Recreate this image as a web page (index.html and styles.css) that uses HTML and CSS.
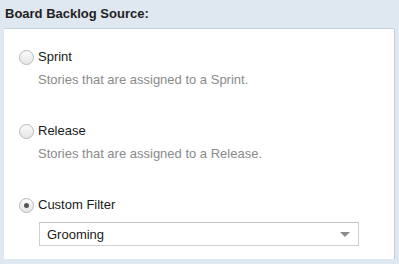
FILE: index.html
```html
<!DOCTYPE html>
<html>
<head>
<meta name="viewport" content="width=device-width, initial-scale=1.0">
<title>Board Backlog Source</title>
<link rel="stylesheet" href="styles.css">
</head>
<body>
<div class="section-title">Board Backlog Source:</div>
<div class="panel">
  <div class="option">
    <label class="option-row"><span class="radio"></span>Sprint</label>
    <div class="option-desc">Stories that are assigned to a Sprint.</div>
  </div>
  <div class="option">
    <label class="option-row"><span class="radio"></span>Release</label>
    <div class="option-desc">Stories that are assigned to a Release.</div>
  </div>
  <div class="option">
    <label class="option-row"><span class="radio checked"></span>Custom Filter</label>
    <div class="select">
      <span class="select-value">Grooming</span>
      <span class="select-arrow"></span>
    </div>
  </div>
</div>
</body>
</html>
```

FILE: styles.css
```css
* {box-sizing: border-box;}

body {
  margin: 0;
  background: #dfe7f0;
  font-family: "Liberation Sans", Arial, sans-serif;
  font-size: 13px;
  color: #222;
}

.section-title {
  height: 28px;
  padding: 6px 5px 0 5px;
  font-weight: bold;
  font-size: 13px;
  color: #1f1f1f;
}

.panel {
  margin: 0 5px 0 4px;
  height: 231px;
  background: #fff;
  border-top: 1px solid #c8d0d8;
  box-shadow: 1px 1px 1px #c5ccd4;
  padding: 20px 15px 0 15px;
  display: flex;
  flex-direction: column;
  gap: 35px;
}

.option-row {
  display: flex;
  align-items: center;
  height: 16px;
  line-height: 16px;
  color: #1a1a1a;
}

/* radio circle drawn by hand */
.radio {
  width: 15px;
  height: 15px;
  border-radius: 50%;
  border: 1px solid #b9b9b9;
  background: linear-gradient(#fbfbfb, #e6e6e6);
  margin-right: 4px;
  display: flex;
  align-items: center;
  justify-content: center;
}

.radio.checked::after {
  content: "";
  width: 5px;
  height: 5px;
  border-radius: 50%;
  background: #555;
}

.option-desc {
  margin-top: 7px;
  margin-left: 19px;
  line-height: 16px;
  color: #8a8a8a;
}

.select {
  margin: 9px 0 0 20px;
  width: 320px;
  height: 24px;
  border: 1px solid #cfcfcf;
  border-top-color: #c4c4c4;
  display: flex;
  align-items: center;
  justify-content: space-between;
  padding: 0 8px 0 7px;
}

.select-value {
  color: #1a1a1a;
}

.select-arrow {
  width: 0;
  height: 0;
  border-left: 5px solid transparent;
  border-right: 5px solid transparent;
  border-top: 5px solid #8c8c8c;
}
```
